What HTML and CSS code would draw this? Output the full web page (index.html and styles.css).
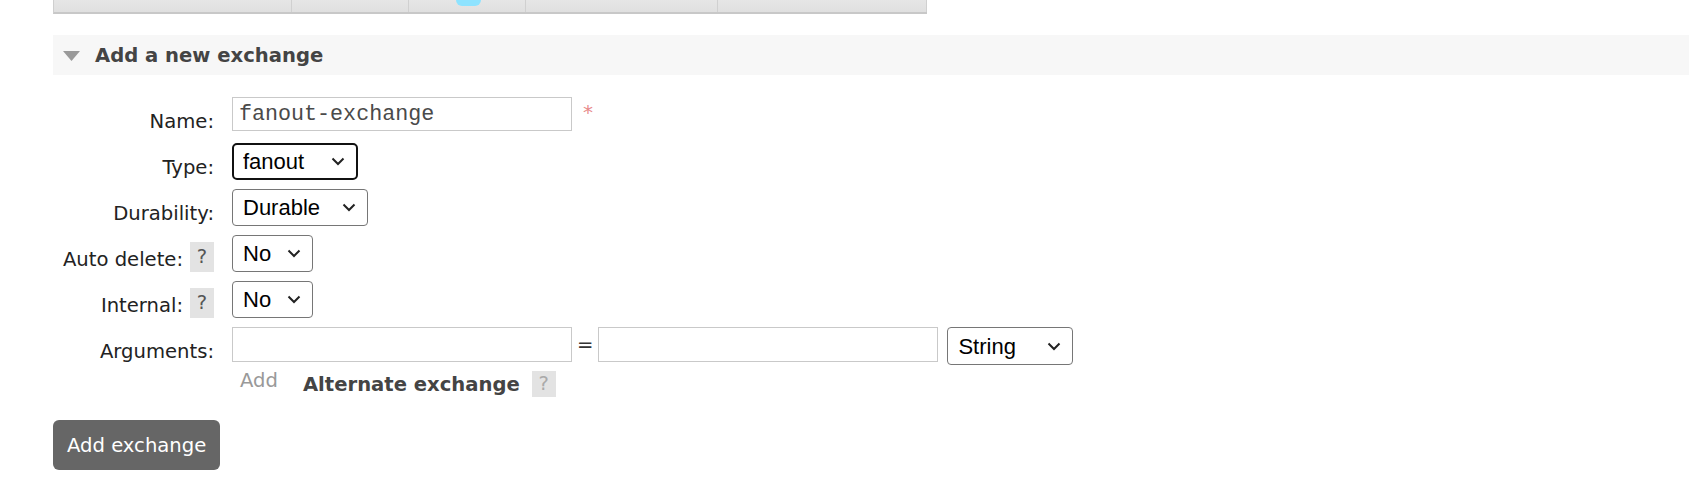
FILE: index.html
```html
<!DOCTYPE html>
<html>
<head>
<meta charset="utf-8">
<link rel="stylesheet" href="styles.css">
</head>
<body>
<div class="page">
  <div class="strip">
    <div class="cell c1"></div>
    <div class="cell c2"></div>
    <div class="cell c3"><span class="blob"></span></div>
    <div class="cell c4"></div>
    <div class="cell c5"></div>
  </div>

  <div class="section-head">
    <svg class="tri" width="17" height="10" viewBox="0 0 17 10"><polygon points="0,0 17,0 8.5,10" fill="#9a9a9a"/></svg>
    <h2>Add a new exchange</h2>
  </div>

  <form class="form">
    <div class="row">
      <div class="label">Name:</div>
      <div class="field">
        <input class="txt mono" type="text" value="fanout-exchange">
        <span class="req">*</span>
      </div>
    </div>
    <div class="row">
      <div class="label">Type:</div>
      <div class="field">
        <select class="sel focused w-type"><option>fanout</option></select>
      </div>
    </div>
    <div class="row">
      <div class="label">Durability:</div>
      <div class="field">
        <select class="sel w-dur"><option>Durable</option></select>
      </div>
    </div>
    <div class="row">
      <div class="label">Auto delete:<span class="help">?</span></div>
      <div class="field">
        <select class="sel w-no"><option>No</option></select>
      </div>
    </div>
    <div class="row">
      <div class="label">Internal:<span class="help">?</span></div>
      <div class="field">
        <select class="sel w-no"><option>No</option></select>
      </div>
    </div>
    <div class="row row-args">
      <div class="label">Arguments:</div>
      <div class="field">
        <input class="txt arg" type="text">
        <span class="eq">=</span>
        <input class="txt arg" type="text">
        <select class="sel w-str"><option>String</option></select>
      </div>
    </div>
    <div class="row row-add">
      <div class="label"></div>
      <div class="field add-field">
        <span class="add">Add</span>
        <span class="alt">Alternate exchange</span>
        <span class="help help-alt">?</span>
      </div>
    </div>
    <button type="button" class="submit">Add exchange</button>
  </form>
</div>
</body>
</html>
```

FILE: styles.css
```css
html, body {
  margin: 0;
  padding: 0;
  background: #ffffff;
}

body {
  font-family: "DejaVu Sans", Verdana, sans-serif;
  font-size: 19.6px;
  color: #484848;
}

.page {
  padding-left: 53px;
}

/* top table remnant */
.strip {
  display: flex;
  width: 873px;
  height: 12px;
  background: linear-gradient(#e6e6e6, #e0e0e0);
  border-bottom: 2px solid #c8c8c8;
  border-left: 1px solid #cfcfcf;
  box-sizing: content-box;
}

.cell {
  height: 12px;
  border-right: 1px solid #d0d0d0;
  box-sizing: border-box;
}

.c1 { width: 238px; }
.c2 { width: 117px; }
.c3 { width: 117px; display: flex; }
.c4 { width: 192px; }
.c5 { width: 209px; }

.blob {
  display: block;
  width: 25px;
  height: 6px;
  margin-left: 47px;
  background: #8ee3ff;
  border-radius: 0 0 8px 8px;
}

/* section header */
.section-head {
  margin-top: 21px;
  height: 40px;
  background: #f7f7f7;
  display: flex;
  align-items: center;
}

.tri {
  margin-left: 10px;
  margin-right: 15px;
  margin-top: 2px;
}

.section-head h2 {
  margin: 0;
  font-size: 19.6px;
  font-weight: bold;
  color: #444;
}

/* form */
.form {
  margin-top: 22px;
  display: flex;
  flex-direction: column;
}

.row {
  display: flex;
  height: 46px;
}

.row-args {
  height: 44px;
}

.row-add {
  height: 26px;
}

.label {
  width: 161px;
  margin-right: 18px;
  display: flex;
  justify-content: flex-end;
  align-items: flex-start;
  padding-top: 10px;
  line-height: 30px;
  height: 30px;
  color: #222;
  white-space: nowrap;
  box-sizing: content-box;
}

.help {
  display: inline-block;
  width: 24px;
  height: 30px;
  line-height: 30px;
  margin-left: 7px;
  margin-top: -3px;
  text-align: center;
  background: #e3e3e3;
  color: #555;
}

.field {
  display: flex;
  align-items: flex-start;
}

.txt {
  box-sizing: border-box;
  width: 340px;
  height: 34px;
  border: 1px solid #c9c9c9;
  border-radius: 0;
  padding: 0 6px;
  margin: 0;
  background: #fff;
  outline: none;
}

.mono {
  font-family: "Liberation Mono", "Courier New", monospace;
  font-size: 21.7px;
  color: #4a4a4a;
}

.arg {
  height: 35px;
}

.req {
  margin-left: 11px;
  margin-top: 5px;
  font-size: 20px;
  line-height: 20px;
  color: #e88a8a;
}

.eq {
  margin: 0 5px;
  line-height: 35px;
  color: #333;
}

.sel {
  -webkit-appearance: none;
  appearance: none;
  box-sizing: border-box;
  height: 37px;
  margin: 0;
  padding: 0 10px;
  font-family: "Liberation Sans", Arial, sans-serif;
  font-size: 22px;
  color: #000;
  border: 1px solid #767676;
  border-radius: 4px;
  background: #fff url("data:image/svg+xml;utf8,<svg xmlns='http://www.w3.org/2000/svg' width='14' height='9' viewBox='0 0 14 9'><path d='M1.5 1.5 L7 7 L12.5 1.5' fill='none' stroke='%23222' stroke-width='2'/></svg>") no-repeat right 11px center;
  outline: none;
}

.focused {
  border: 2px solid #111;
  border-radius: 5px;
  padding-left: 9px;
}

.w-type { width: 126px; }
.w-dur { width: 136px; }
.w-no { width: 81px; }
.w-str { width: 126px; height: 38px; margin-left: 9px; }

.add-field {
  align-items: center;
  height: 26px;
}

.add {
  margin-left: 8px;
  margin-top: -8px;
  color: #999;
}

.alt {
  margin-left: 25px;
  font-weight: bold;
  color: #444;
}

.help-alt {
  height: 26px;
  line-height: 26px;
  margin-left: 12px;
  margin-top: -1px;
  color: #aaa;
}

.submit {
  align-self: flex-start;
  margin-top: 23px;
  height: 50px;
  padding: 0 14px;
  border: none;
  border-radius: 6px;
  background: #666;
  color: #fff;
  font-family: "DejaVu Sans", Verdana, sans-serif;
  font-size: 19.6px;
  cursor: pointer;
}
```
